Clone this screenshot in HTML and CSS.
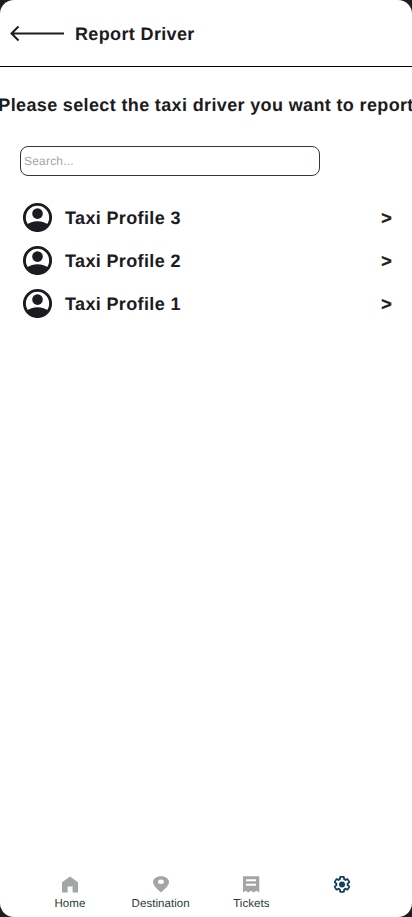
FILE: index.html
```html
<!DOCTYPE html>
<html lang="en">
<head>
<meta charset="utf-8">
<title>Report Driver</title>
<link rel="stylesheet" href="styles.css">
</head>
<body>
<svg class="symbols" aria-hidden="true">
  <symbol id="account" viewBox="0 0 30 30">
    <circle cx="15.500" cy="15.500" r="13.100" fill="none" stroke="currentColor" stroke-width="2.900"/>
    <circle cx="15.500" cy="11.600" r="5.300" fill="currentColor"/>
    <path d="M4 23.300Q9 19.300 15.500 19.300T27 23.300Q22.100 29 15.500 29T4 23.300Z" fill="currentColor"/>
  </symbol>
</svg>
<div class="screen">
  <header class="topbar">
    <svg class="back" viewBox="0 0 54 18"><path d="M54 9.500H2M8.500 2.500L1.500 9.500L8.500 16.500" fill="none" stroke="currentColor" stroke-width="2"/></svg>
    <h1 class="title">Report Driver</h1>
  </header>
  <main class="content">
    <p class="prompt">Please select the taxi driver you want to report</p>
    <input class="search" type="text" placeholder="Search...">
    <ul class="profiles">
      <li class="profile"><svg class="avatar"><use href="#account"/></svg><span class="name">Taxi Profile 3</span><span class="chevron">&gt;</span></li>
      <li class="profile"><svg class="avatar"><use href="#account"/></svg><span class="name">Taxi Profile 2</span><span class="chevron">&gt;</span></li>
      <li class="profile"><svg class="avatar"><use href="#account"/></svg><span class="name">Taxi Profile 1</span><span class="chevron">&gt;</span></li>
    </ul>
  </main>
  <nav class="tabs">
    <a class="tab"><svg class="icon" viewBox="0 0 18 18"><path d="M1 17.400V7.200L9 1.400L17 7.200V17.400H11.600V11.400H6.600V17.400Z"/></svg><span>Home</span></a>
    <a class="tab"><svg class="icon" viewBox="0 0 18 18"><path fill-rule="evenodd" d="M9 17.500C3.500 12.700 1 9.800 1 7.100C1 3.600 4.500 1.200 9 1.200S17 3.600 17 7.100C17 9.800 14.500 12.700 9 17.500ZM9 8.900A2.900 2.200 0 1 0 9 4.500A2.900 2.200 0 0 0 9 8.900Z"/></svg><span>Destination</span></a>
    <a class="tab"><svg class="icon" viewBox="0 0 18 18"><path fill-rule="evenodd" d="M1 1.200H17.300V17.500L14.500 15.700L11.800 17.500L9 15.700L6.200 17.500L3.500 15.700L1 17.500ZM4 4.200V6.200H14V4.200ZM4 8.800V10.800H14V8.800Z"/></svg><span>Tickets</span></a>
    <a class="tab active"><svg class="icon" viewBox="0 -.5 24 24"><path d="M19.430 12.980c.04-.32.07-.64.07-.98s-.03-.66-.07-.98l2.110-1.650c.19-.15.24-.42.12-.64l-2-3.460c-.12-.22-.39-.3-.61-.22l-2.490 1c-.52-.4-1.080-.73-1.690-.98l-.38-2.650C14.460 2.180 14.250 2 14 2h-4c-.25 0-.46.18-.49.42l-.38 2.650c-.61.25-1.170.59-1.690.98l-2.490-1c-.23-.09-.49 0-.61.22l-2 3.460c-.13.22-.07.49.12.64l2.110 1.650c-.04.32-.07.65-.07.98s.03.66.07.98l-2.110 1.650c-.19.15-.24.42-.12.64l2 3.460c.12.22.39.3.61.22l2.490-1c.52.4 1.080.73 1.690.98l.38 2.650c.03.24.24.42.49.42h4c.25 0 .46-.18.49-.42l.38-2.650c.61-.25 1.170-.59 1.690-.98l2.490 1c.23.09.49 0 .61-.22l2-3.460c.12-.22.07-.49-.12-.64z" fill="none" stroke="currentColor" stroke-width="2.400"/><circle cx="12" cy="12" r="4"/></svg></a>
  </nav>
</div>
</body>
</html>
```
FILE: styles.css
```css
* { box-sizing: border-box; }
body {
  margin: 0;
  background: #1e1e1e;
  color: #1d1b20;
  font-family: "Liberation Sans", Arial, sans-serif;
  text-rendering: geometricPrecision;
}
.symbols { display: none; }
.screen {
  display: flex;
  flex-direction: column;
  width: 412px;
  height: 917px;
  overflow: hidden;
  background: #fff;
  border-radius: 14px;
}
.topbar {
  display: flex;
  align-items: center;
  gap: 11px;
  height: 67px;
  padding-left: 10px;
  border-bottom: 1px solid #000;
}
.back { width: 54px; height: 18px; }
.title, .prompt, .profile {
  margin: 0;
  font-size: 18px;
  font-weight: 700;
  line-height: 24px;
  letter-spacing: 0.36px;
}
.title { padding-top: 2px; }
.content {
  flex: 1;
  display: flex;
  flex-direction: column;
  padding-top: 26px;
}
.prompt {
  align-self: center;
  white-space: nowrap;
}
.search {
  width: 300px;
  height: 30px;
  margin: 29px 0 0 20px;
  padding: 0 3px;
  border: 1px solid #2c3a3a;
  border-radius: 8px;
  background: #fff;
  font: 12px "Liberation Sans", Arial, sans-serif;
  letter-spacing: 0.2px;
  text-rendering: geometricPrecision;
}
.search::placeholder { color: #a2a6a5; opacity: 1; }
.profiles {
  display: flex;
  flex-direction: column;
  gap: 13px;
  margin: 26px 20px 0 22px;
  padding: 0;
  list-style: none;
}
.profile {
  display: flex;
  align-items: center;
  height: 30px;
}
.avatar { width: 30px; height: 30px; margin-right: 13px; overflow: visible; }
.name, .chevron { padding-top: 2px; }
.chevron { margin-left: auto; -webkit-text-stroke: 0.4px currentColor; }
.tabs {
  display: grid;
  grid-template-columns: repeat(4, 1fr);
  height: 42px;
  padding: 0 24.600px;
}
.tab {
  display: flex;
  flex-direction: column;
  align-items: center;
  gap: 4px;
  color: #2c3a3a;
  font-size: 11.500px;
  line-height: 14px;
  letter-spacing: 0.05px;
}
.icon { width: 18px; height: 18px; fill: #a2a6a5; }
.active { color: #143d60; }
.active .icon { fill: currentColor; }
```
